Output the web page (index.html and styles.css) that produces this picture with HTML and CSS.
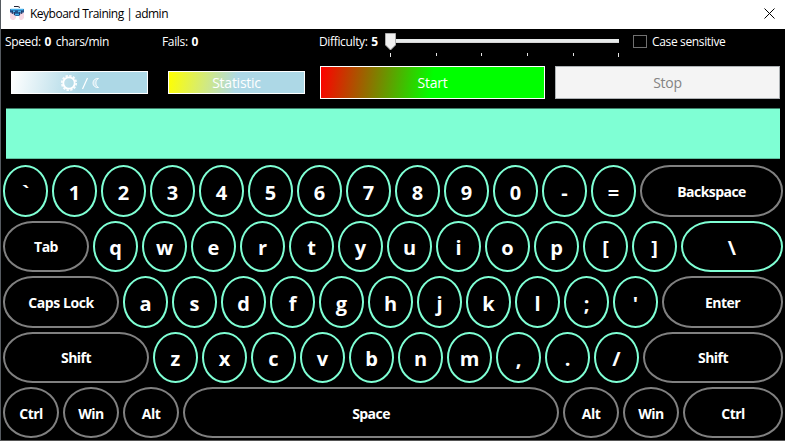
FILE: index.html
```
<!DOCTYPE html>
<html lang="en">
<head>
<meta charset="utf-8">
<title>Keyboard Training</title>
<link rel="stylesheet" href="styles.css">
</head>
<body>
<div class="window">
  <header class="titlebar">
    <svg class="app-icon" width="16" height="16" viewBox="0 0 16 16">
      <path d="M5 .5h4l2 1" fill="none" stroke="#223" />
      <path d="M1 3h14v7H1z" fill="#1f4f88"/>
      <path d="M1.500 3.500h13M4 5.500h2M9 5.500h3M6 8.500h4" stroke="#48b4ee" stroke-width="1.400"/>
      <path d="M1 12V7l1-1 1 2 1-2 1 3 2 1v2l-2 2H3zM15 12V7l-1-1-1 2-1-2-1 3-1 1v2l1 2h2z" fill="#f8d9e4"/>
      <path d="M3.500 5v3M5.500 6v3M10.500 6v3M12.500 5v3" stroke="#26335f" stroke-width=".8"/>
    </svg>
    <span class="title">Keyboard Training | admin</span>
    <svg class="close" width="11" height="11" viewBox="0 0 11 11"><path d="M.5.5l10 10M10.500.5l-10 10" stroke="#000" fill="none"/></svg>
  </header>
  <section class="status">
    <div class="stat speed">Speed: <b>0</b> <span class="unit">chars/min</span></div>
    <div class="stat fails">Fails: <b>0</b></div>
    <div class="stat difficulty">Difficulty: <b>5</b></div>
    <svg class="slider" width="240" height="28" viewBox="0 0 240 28">
      <rect x="5" y="10" width="229" height="4" fill="#e7eaea"/><path d="M5 13.500h229" stroke="#d6d6d6"/>
      <path d="M5.500 24v4M51.500 24v3M96.500 24v3M142.500 24v3M188.500 24v3M233.500 24v4" stroke="#e5e5e5"/>
      <path d="M.5 4.500h10v11.500l-5 5-5-5z" fill="#f0f0f0" stroke="#acacac"/>
    </svg>
    <div class="check"><span class="box"></span><span class="check-label">Case sensitive</span></div>
  </section>
  <section class="actions">
    <div class="btn theme">
      <svg width="41" height="18" viewBox="0 0 41 18">
        <circle cx="10" cy="9" r="5.700" fill="none" stroke="#fff" stroke-width="1.800"/>
        <circle cx="10" cy="9" r="7.200" fill="none" stroke="#fff" stroke-opacity=".9" stroke-width="1.800" stroke-dasharray="2.400 1.370"/>
        <path d="M28.500 4l-5 11" fill="none" stroke="#fff" stroke-width="1.200"/>
        <path d="M39.500 4.500A4.600 4.600 0 1 0 39.500 13.500A5.200 5.200 0 0 1 39.500 4.500Z" fill="#fff" fill-opacity=".35" stroke="#fff" stroke-opacity=".85"/>
      </svg>
    </div>
    <div class="btn statistic">Statistic</div>
    <div class="btn start">Start</div>
    <div class="btn stop">Stop</div>
  </section>
  <div class="prompt"></div>
  <main class="keyboard">
    <div class="row">
      <div class="key">`</div><div class="key">1</div><div class="key">2</div><div class="key">3</div><div class="key">4</div><div class="key">5</div><div class="key">6</div><div class="key">7</div><div class="key">8</div><div class="key">9</div><div class="key">0</div><div class="key">-</div><div class="key">=</div><div class="key fn fill">Backspace</div>
    </div>
    <div class="row">
      <div class="key fn tab">Tab</div><div class="key">q</div><div class="key">w</div><div class="key">e</div><div class="key">r</div><div class="key">t</div><div class="key">y</div><div class="key">u</div><div class="key">i</div><div class="key">o</div><div class="key">p</div><div class="key">[</div><div class="key">]</div><div class="key fill">\</div>
    </div>
    <div class="row">
      <div class="key fn caps">Caps Lock</div><div class="key">a</div><div class="key">s</div><div class="key">d</div><div class="key">f</div><div class="key">g</div><div class="key">h</div><div class="key">j</div><div class="key">k</div><div class="key">l</div><div class="key">;</div><div class="key">'</div><div class="key fn fill">Enter</div>
    </div>
    <div class="row">
      <div class="key fn shift">Shift</div><div class="key">z</div><div class="key">x</div><div class="key">c</div><div class="key">v</div><div class="key">b</div><div class="key">n</div><div class="key">m</div><div class="key">,</div><div class="key">.</div><div class="key">/</div><div class="key fn fill">Shift</div>
    </div>
    <div class="row">
      <div class="key fn mod">Ctrl</div><div class="key fn mod">Win</div><div class="key fn mod">Alt</div><div class="key fn fill">Space</div><div class="key fn mod">Alt</div><div class="key fn mod">Win</div><div class="key fn ctrl">Ctrl</div>
    </div>
  </main>
</div>
</body>
</html>
```
FILE: styles.css
```
* { box-sizing: border-box; }
body { margin: 0; background: #000; font-family: "Open Sans", "Noto Sans", sans-serif; }
.window {
  width: 785px; height: 441px; overflow: hidden;
  display: flex; flex-direction: column;
  background: #000; color: #fff;
  border-left: 1px solid #555a60; border-bottom: 1px solid #555;
}
.titlebar {
  height: 29px; flex: none; display: flex; align-items: center;
  background: #fff; color: #000; padding: 0 10px 2px 8px;
}
.app-icon { margin-right: 5px; }
.title { font-size: 12px; letter-spacing: -.5px; white-space: nowrap; }
.close { margin-left: auto; }
.status {
  height: 32px; flex: none; display: flex; align-items: flex-start;
  padding-left: 4px; font-size: 12px; letter-spacing: -.35px;
}
.stat { line-height: 26px; white-space: nowrap; }
.stat b { margin: 0 1px; }
.unit { margin-left: 1px; }
.speed { width: 157px; }
.fails { width: 157px; }
.difficulty { width: 66px; }
.slider { flex: none; }
.check { display: flex; align-items: center; margin-left: 8px; height: 24px; }
.box { width: 14px; height: 13px; border: 1px solid #707070; margin-right: 5px; }
.check-label { white-space: nowrap; }
.actions { height: 43px; flex: none; display: flex; align-items: center; padding: 0 5px 0 10px; }
.btn {
  display: flex; align-items: center; justify-content: center; flex: none;
  height: 23px; border: 1px solid #fff; font-size: 14px; letter-spacing: -.25px;
}
.theme { width: 137px; margin-right: 20px; background: linear-gradient(100deg, #fff, #add8e6 50%); }
.statistic { width: 137px; margin-right: 15px; background: linear-gradient(100deg, #ff0, #add8e6 50%); }
.start { width: 225px; height: 33px; margin-right: 10px; background: linear-gradient(98deg, #f00, #0f0 50%); }
.stop { width: 225px; height: 33px; background: #f4f4f4; border-color: #adb2b5; color: #838383; }
.prompt {
  height: 51px; flex: none; margin: 4px 5px 6px; background: #7fffd4;
  border-top: 1px solid #3f806a; border-bottom: 1px solid #5fbf9f;
}
.keyboard { display: flex; flex-direction: column; gap: 4px; padding: .4px 2px 0 2px; }
.row { display: flex; gap: 4px; height: 51.4px; }
.key {
  width: 45px; flex: none; display: flex; align-items: center; justify-content: center;
  border: 2px solid #7fffd4; border-radius: 50%;
  font-size: 20px; font-weight: 700; line-height: 27px; padding-top: 3px;
}
.fn { border-color: #808080; font-size: 14px; letter-spacing: -.55px; border-radius: 30px / 25.7px; padding-top: 1px; }
.fill { flex: 1; border-radius: 30px / 25.7px; }
.tab { width: 86px; }
.caps { width: 116px; letter-spacing: -.4px; }
.shift { width: 146px; }
.mod { width: 56px; border-radius: 50%; }
.ctrl { width: 100px; }
```
